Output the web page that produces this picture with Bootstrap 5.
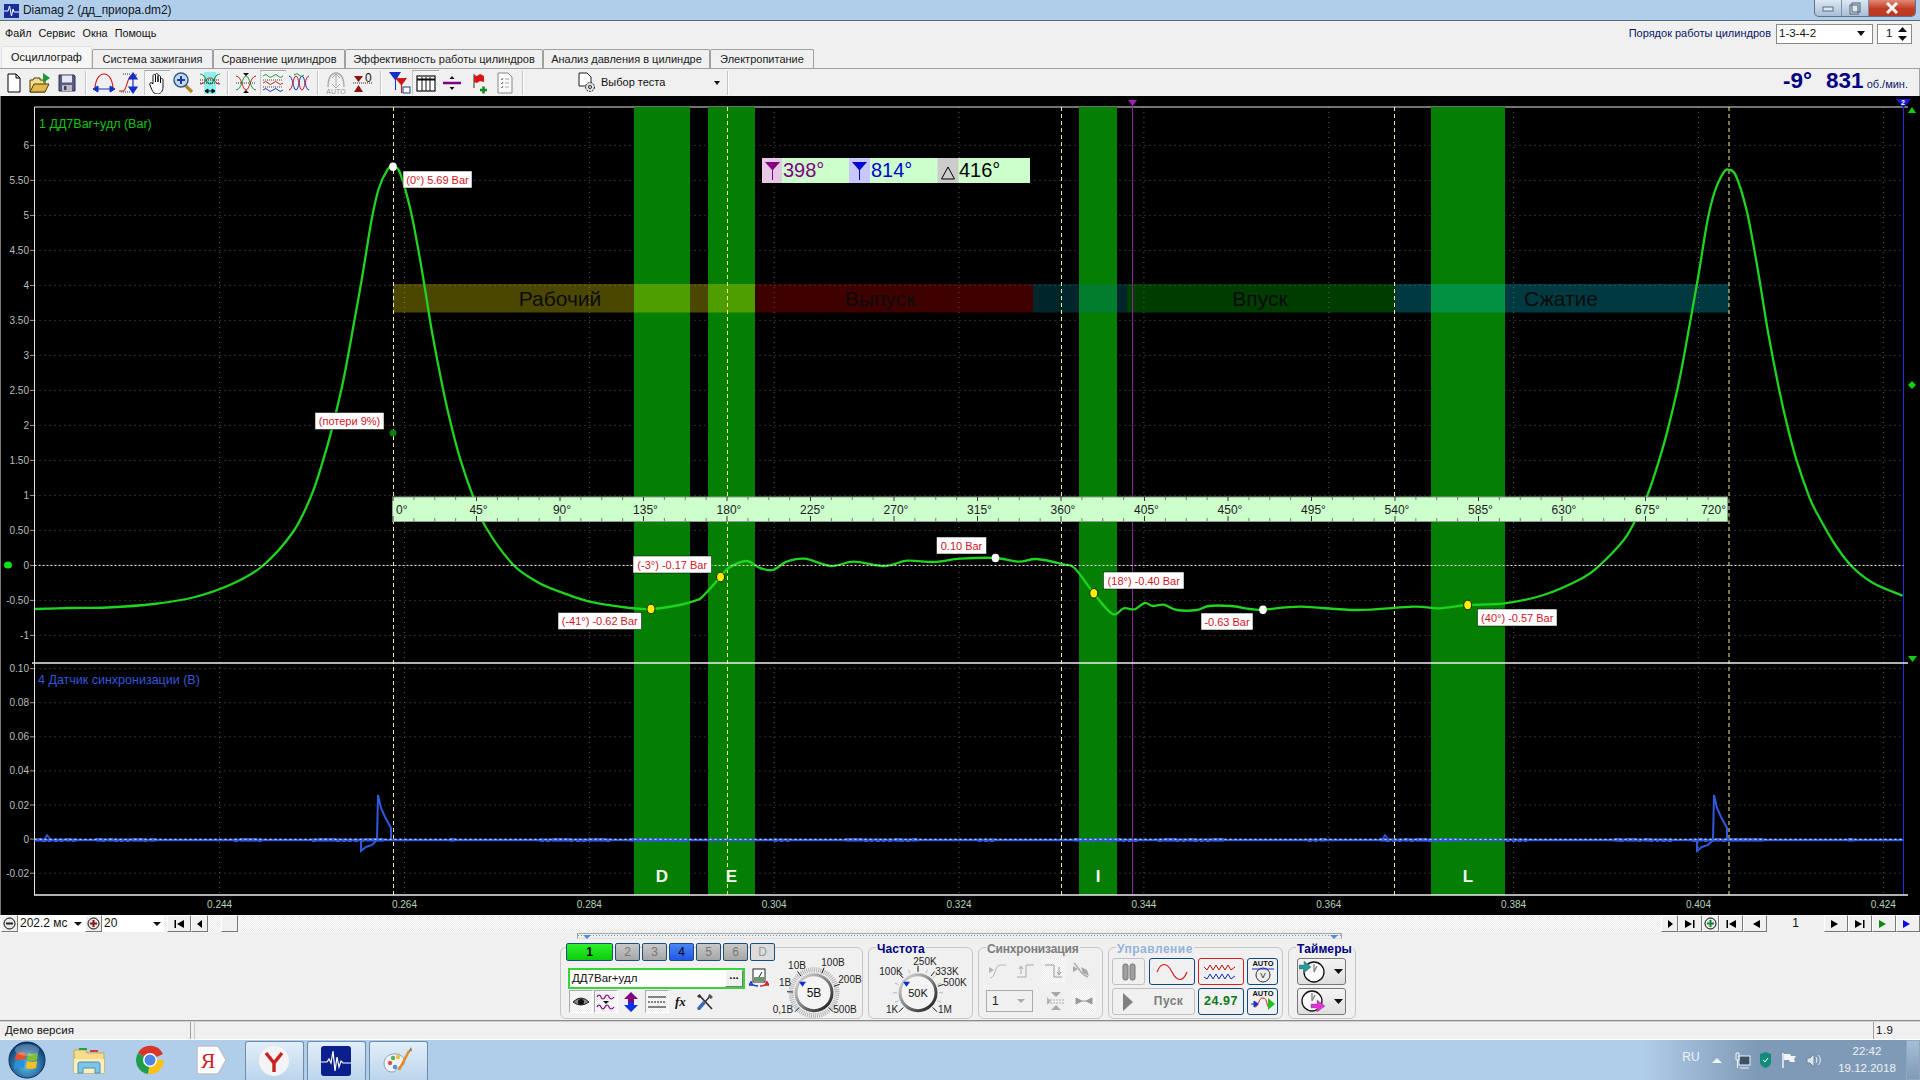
<!DOCTYPE html>
<html lang="ru">
<head>
<meta charset="utf-8">
<title>Diamag 2</title>
<link href="https://cdn.jsdelivr.net/npm/bootstrap@5.3.0/dist/css/bootstrap.min.css" rel="stylesheet">
<style>
    html, body { margin: 0; height: 1080px; overflow: hidden; background: #f0f0f0; }
    body { font: 11px/1.2 "Liberation Sans", Arial, sans-serif; color: #111; }
    svg { display: block; }
    .app-root { height: 1080px; }
    .dith { background: repeating-conic-gradient(#fff 0 25%, #e9e9e9 0 50%) 0 0 / 2px 2px; }

    .win-title { height: 21px; background: #b0cde9; border-bottom: 1px solid #5d6b78; font-size: 11.9px; }
    .win-title .cap { margin-left: 4px; color: #10181f; line-height: 13px; }
    .win-ctl { width: 102px; height: 17px; border: 1px solid #5f7186; border-top: 0; border-radius: 0 0 5px 5px; overflow: hidden; background: linear-gradient(#dce8f4, #a9bfd6); }
    .win-ctl span { height: 100%; width: 27px; border-right: 1px solid #7d8fa3; }
    .win-ctl .cl { flex: 1; border: 0; background: linear-gradient(#e08a78, #c43a22 55%, #b83a24); }

    .menu-row { height: 25px; padding-left: 5px; font-size: 10.8px; }
    .menu-row .mi { margin-right: 7px; }
    .order-lbl { color: #0b1566; margin-right: 5px; font-size: 11px; }
    .combo { height: 20px; background: #fff; border: 1px solid #8a8a8a; padding-left: 2px; font-size: 11.5px; }
    .combo .arr { margin-left: auto; margin-right: 7px; width: 0; height: 0; border: 4px solid transparent; border-top: 5px solid #111; border-bottom: 0; }
    .cb-order { width: 97px; }
    .cb-num { width: 35px; padding-left: 8px; }

    .scope-tabs { height: 22px; flex-wrap: nowrap; border: 0; padding-left: 1px; align-items: flex-end; }
    .scope-tabs .nav-link { height: 19px; padding: 3px 0 0; margin: 0; text-align: center; font-size: 11px; color: #222; border: 1px solid #a0a0a0; border-bottom: 0; border-radius: 2px 2px 0 0; background: #f0f0f0; white-space: nowrap; }
    .scope-tabs .nav-link.active { height: 22px; background: #f6f6f6; color: #111; padding-top: 4px; }
    .scope-tabs li:nth-child(1) .nav-link { width: 91px; }
    .scope-tabs li:nth-child(2) .nav-link { width: 121px; }
    .scope-tabs li:nth-child(3) .nav-link { width: 132px; }
    .scope-tabs li:nth-child(4) .nav-link { width: 198px; }
    .scope-tabs li:nth-child(5) .nav-link { width: 167px; }
    .scope-tabs li:nth-child(6) .nav-link { width: 104px; }

    .tool-row { height: 28px; border-top: 1px solid #a0a0a0; border-right: 1px solid #a0a0a0; padding-left: 1px; }
    .tb { width: 26.5px; height: 25px; flex: none; display: flex; align-items: center; justify-content: center; }
    .tb.on { background: repeating-conic-gradient(#fff 0 25%, #e9e9e9 0 50%) 0 0 / 2px 2px; border-top: 1px solid #a8a8a8; border-left: 1px solid #c8c8c8; }
    .tsep { width: 2px; height: 24px; flex: none; margin: 0 4px; background: #c4c4c4; border-right: 1px solid #fff; }
    .test-pick { width: 197px; padding-left: 47px; font-size: 11px; margin-left: 2px; }
    .test-pick .arr { margin-left: auto; margin-right: 7px; width: 0; height: 0; border: 3px solid transparent; border-top: 4px solid #111; border-bottom: 0; }
    .speed { color: #000080; font-weight: 700; font-size: 22.5px; line-height: 26px; margin-right: 11px; }
    .speed .deg { margin-right: 14px; }
    .speed small { font-weight: 400; font-size: 11px; color: #0b1566; margin-left: 3px; }

    #scope { background: #000; flex: none; }

    .pager { height: 17px; background: repeating-conic-gradient(#fff 0 25%, #e9e9e9 0 50%) 0 0 / 2px 2px; }
    .pg { width: 24px; height: 17px; flex: none; background: #f0f0f0; border: 1px solid; border-color: #fff #777 #777 #fff; display: flex; align-items: center; justify-content: center; color: #000; }
    .pg.sm { width: 17px; }
    .pg.first { margin-left: 1px; }
    .pg.after-fld { margin-left: 3px; }
    .pg.thumb { margin-left: 13px; }
    .pg.go { color: #0a8a0a; }
    .pg.blue { color: #0a0ae0; }
    .fld { height: 17px; background: #fff; font-size: 12px; padding-left: 2px; flex: none; }
    .fld .arr { margin-left: auto; margin-right: 3px; width: 0; height: 0; border: 4px solid transparent; border-top: 4px solid #111; border-bottom: 0; }
    .fld-ms { width: 67px; }
    .fld-n { width: 62px; }
    .pg-num { width: 57px; background: #f0f0f0; font-size: 12px; line-height: 17px; flex: none; text-align: center; }

    .ctl-panel { height: 89px; flex: none; border-bottom: 1px solid #8c8c8c; }
    .strip { height: 6px; width: 765px; margin: 1px 0 0 577px; border: 1px solid #a4a4a4; border-bottom-color: #ddd; background: repeating-linear-gradient(90deg, #5d8ecb 0 1px, #0000 1px 3px) 0 1px / 100% 1px no-repeat; position: relative; }
    .strip-mark { position: absolute; top: 1px; width: 0; height: 0; border: 4px solid transparent; border-top: 4px solid #4a90d8; border-bottom: 0; }
    .strip-mark.a { left: 5px; }
    .strip-mark.b { right: 3px; }
    .gboxes { padding-left: 560px; margin-top: 8px; gap: 5px; }
    .gbox { position: relative; height: 72px; border: 1px solid #c6c6c6; border-radius: 6px; flex: none; }
    .g-chan { width: 303px; }
    .g-chan-left { width: 215px; flex: none; }
    .g-freq { width: 105px; }
    .g-sync { width: 125px; }
    .g-ctl { width: 175px; }
    .g-tm { width: 68px; }
    .gtitle { position: absolute; left: 7px; top: -5px; font-weight: 700; font-size: 12px; line-height: 12px; background: #f0f0f0; padding: 0 1px; z-index: 1; }
    .t-navy { color: #000080; letter-spacing: .1px; }
    .t-gray { color: #7d7d7d; letter-spacing: -.15px; }
    .t-blue { color: #93b3d8; letter-spacing: .5px; }
    .knob { overflow: visible; }

    .chan-row { margin: -5px 0 0 5px; gap: 2px; }
    .chan { height: 18px; width: 25px; padding: 0; font-size: 12px; line-height: 14px; color: #777; border: 1px solid #1f4f78; border-radius: 2px; background: linear-gradient(#c9c9c9, #a6a6a6); }
    .chan.c1 { width: 47px; color: #000; background: linear-gradient(#2df02d, #0ccc0c); font-weight: 700; }
    .chan.c4 { color: #000; background: linear-gradient(#4a86f4, #2058e8); }
    .chan.cd { background: #dcdcdc; color: #999; }
    .name-fld { width: 177px; height: 21px; margin: 7px 0 0 7px; border: 2px solid #3ad33a; background: #fff; font-size: 11.5px; padding-left: 2px; }
    .name-fld .dots { margin-left: auto; width: 18px; height: 17px; background: #f0f0f0; border: 1px solid; border-color: #fff #777 #777 #fff; text-align: center; line-height: 9px; font-weight: 700; }
    .name-ic { margin: 7px 0 0 4px; }
    .chan-tools { margin-left: 8px; margin-top: 1px; }
    .ct { width: 24px; height: 23px; flex: none; display: flex; align-items: center; justify-content: center; }
    .ct.on { background: repeating-conic-gradient(#fff 0 25%, #eaeaea 0 50%) 0 0 / 2px 2px; border: 1px solid; border-color: #aaa #fff #fff #aaa; }
    .ct.m1 { margin-left: 1px; }
    .ct.m2 { margin-left: 2px; }
    .ct.mn { margin-left: -2px; }

    .sync-row { gap: 4px; padding-left: 7px; }
    .sync-row.r1 { margin-top: 11px; }
    .sync-row.r2 { margin-top: 6px; }
    .si { width: 24px; height: 24px; flex: none; display: flex; align-items: center; justify-content: center; }
    .sync-sel { width: 47px; height: 22px; border: 1px solid #aaa; font-size: 12px; padding-left: 5px; color: #222; margin-right: 7px; }
    .sync-sel .arr { margin-left: auto; margin-right: 7px; width: 0; height: 0; border: 4px solid transparent; border-top: 4px solid #aaa; border-bottom: 0; }

    .ctl-row { gap: 3px; padding-left: 3px; }
    .ctl-row.r1 { margin-top: 10px; }
    .ctl-row.r2 { margin-top: 3px; }
    .kb { height: 27px; flex: none; padding: 0; display: flex; align-items: center; justify-content: center; border-radius: 3px; background: #f0f0f0; border: 1px solid #0f4a7e; }
    .kb.dim { border-color: #c0c0c0; }
    .kb.red { border-color: #d42020; }
    .kb.raised { background: linear-gradient(#f4f4f4, #dedede); border: 1px solid #777; width: 49px; margin-left: 8px; }
    .kb.raised.top { margin-top: 10px; }
    .kb.raised.low { margin-top: 3px; }
    .w31 { width: 31px; }
    .w33 { width: 33px; }
    .w46 { width: 46px; }
    .w46.nudge { margin-left: 1px; }
    .w83 { width: 83px; }
    .go-ic { margin-left: 2px; }
    .go-txt { font-weight: 700; font-size: 12px; color: #7d7d7d; margin-left: 20px; margin-right: 4px; letter-spacing: .4px; }
    .freq-val { font-weight: 700; font-size: 12.5px; color: #0a7a1a; letter-spacing: .5px; }

    .status-row { height: 18px; flex: none; border-top: 1px solid #d0d0d0; font-size: 11.5px; }
    .st-a { width: 191px; padding: 2px 0 0 5px; border-right: 1px solid #a0a0a0; }
    .st-b { width: 3px; }
    .st-c { flex: 1; border-left: 1px solid #c8c8c8; border-right: 1px solid #a0a0a0; }
    .st-d { width: 46px; padding: 2px 0 0 2px; letter-spacing: .5px; }

    .taskbar { height: 41px; flex: none; border-top: 1px solid #fff; background: linear-gradient(90deg, #b0cde9 85.5%, #7f9ab6 91.5%); }
    .orb { width: 58.5px; flex: none; display: flex; justify-content: center; padding-right: 5px; }
    .tk { width: 61px; flex: none; display: flex; align-items: center; justify-content: center; }
    .tk-box { width: 59px; height: 39px; flex: none; margin-left: 3px; display: flex; align-items: center; justify-content: center; border: 1px solid #6e8cab; border-bottom: 0; border-radius: 3px 3px 0 0; background: linear-gradient(#e2eef9, #bcd5ec); }
    .tray { margin-left: auto; color: #eef3f8; }
    .tray > div { display: flex; align-items: center; justify-content: center; height: 40px; flex: none; }
    .tray .t-lang { width: 26px; font-size: 12px; padding-bottom: 5px; }
    .tray .t26 { width: 26px; }
    .tray .t24 { width: 24px; }
    .tray .t23 { width: 23px; }
    .tray .t28 { width: 28px; }
    .clock { width: 78px; flex-direction: column; font-size: 11.5px; line-height: 17px; }
    .show-desk { width: 14px; border: 1px solid #8ea6bf; background: linear-gradient(#a7bed6, #8099b4); }
</style>
</head>
<body>
<svg width="0" height="0" class="position-absolute">
    <defs>
        <symbol id="g-r" viewBox="0 0 10 10"><path d="M3 1l5 4-5 4z" fill="currentColor"/></symbol>
        <symbol id="g-l" viewBox="0 0 10 10"><path d="M7 1L2 5l5 4z" fill="currentColor"/></symbol>
        <symbol id="g-rr" viewBox="0 0 12 10"><path d="M1 1l7 4-7 4z" fill="currentColor"/></symbol>
        <symbol id="g-ll" viewBox="0 0 12 10"><path d="M11 1L4 5l7 4z" fill="currentColor"/></symbol>
        <symbol id="g-last" viewBox="0 0 12 10"><path d="M1 1l7 4-7 4zM9 1h1.5v8H9z" fill="currentColor"/></symbol>
        <symbol id="g-first" viewBox="0 0 12 10"><path d="M11 1L4 5l7 4zM1.5 1H3v8H1.5z" fill="currentColor"/></symbol>
        <symbol id="g-clock" viewBox="0 0 28 24"><circle cx="13" cy="12" r="10" fill="#fafafa" stroke="#111" stroke-width="1.3"/><path d="M13 12l3-6M13 12V4" stroke="#888" stroke-width="1.4" fill="none"/></symbol>
    </defs>
</svg>

<div class="app-root d-flex flex-column">

    <!-- title bar -->
    <div class="win-title d-flex align-items-start flex-shrink-0">
        <svg class="ms-1 mt-1" width="15" height="14" viewBox="0 0 15 14"><rect width="15" height="14" fill="#1a2f9c"/><path d="M0 7h4l1.5-5 2 10 1.5-7 1 3h5" stroke="#fff" fill="none"/></svg>
        <span class="cap mt-1">Diamag 2 (дд_приора.dm2)</span>
        <div class="win-ctl d-flex ms-auto me-1">
            <span class="d-flex align-items-center justify-content-center"><svg width="12" height="8"><rect x="1" y="3" width="10" height="4" fill="#dfe7ef" stroke="#5c6c7d"/></svg></span>
            <span class="d-flex align-items-center justify-content-center"><svg width="12" height="13"><rect x="1" y="3" width="8" height="9" fill="#dfe7ef" stroke="#4f5f70"/><rect x="3" y="1" width="8" height="9" fill="none" stroke="#4f5f70"/></svg></span>
            <span class="cl d-flex align-items-center justify-content-center"><svg width="14" height="12"><path d="M2 1l10 10M12 1L2 11" stroke="#f4f4f4" stroke-width="3"/></svg></span>
        </div>
    </div>

    <!-- menu -->
    <div class="menu-row d-flex align-items-center flex-shrink-0">
        <span class="mi">Файл</span><span class="mi">Сервис</span><span class="mi">Окна</span><span class="mi">Помощь</span>
        <span class="order-lbl ms-auto">Порядок работы цилиндров</span>
        <div class="combo cb-order d-flex align-items-center">1-3-4-2<span class="arr"></span></div>
        <div class="combo cb-num d-flex align-items-center ms-1 me-2">1
            <svg class="ms-auto me-1" width="9" height="14"><path d="M4.5 0L9 5H0zM0 9h9l-4.5 5z" fill="#111"/></svg>
        </div>
    </div>

    <!-- tabs -->
    <ul class="nav nav-tabs scope-tabs flex-shrink-0">
        <li class="nav-item"><a class="nav-link active" href="#">Осциллограф</a></li>
        <li class="nav-item"><a class="nav-link" href="#">Система зажигания</a></li>
        <li class="nav-item"><a class="nav-link" href="#">Сравнение цилиндров</a></li>
        <li class="nav-item"><a class="nav-link" href="#">Эффективность работы цилиндров</a></li>
        <li class="nav-item"><a class="nav-link" href="#">Анализ давления в цилиндре</a></li>
        <li class="nav-item"><a class="nav-link" href="#">Электропитание</a></li>
    </ul>

    <!-- toolbar -->
    <div class="tool-row d-flex align-items-center flex-shrink-0">
        <div class="tb"><svg width="22" height="22" viewBox="0 0 22 22"><path d="M5 2h8l4 4v14H5zM13 2v4h4" fill="#fff" stroke="#000"/></svg></div>
        <div class="tb"><svg width="24" height="22" viewBox="0 0 24 22"><path d="M1 20V8h3l1-2h6v2h5v12z" fill="#f4e08a" stroke="#4c3b05"/><path d="M1 20l4-8h15l-4 8z" fill="#e4b94c" stroke="#4c3b05"/><path d="M14 1l7 5-7 5z" fill="#1a9a3c"/></svg></div>
        <div class="tb"><svg width="20" height="20" viewBox="0 0 20 20"><path d="M2 2h15l1 1v15H2z" fill="#5a5a86" stroke="#33334f"/><rect x="5" y="2.5" width="10" height="7" fill="#e8e8f2"/><rect x="5" y="12" width="10" height="6" fill="#bcbcc8"/><rect x="7" y="13" width="2.5" height="4" fill="#444"/></svg></div>
        <div class="tsep"></div>
        <div class="tb"><svg width="24" height="22" viewBox="0 0 24 22"><path d="M3 18C3 8 7 2 12 2s9 6 9 16" fill="none" stroke="#d01818" stroke-width="1.2"/><path d="M4 17h16M1 17l5-3v6zM23 17l-5-3v6z" fill="#1030c8" stroke="#1030c8"/></svg></div>
        <div class="tb"><svg width="24" height="22" viewBox="0 0 24 22"><path d="M1 19h4C9 19 9 4 14 3h5" fill="none" stroke="#d01818" stroke-width="1.1"/><path d="M5 2h8M3 20h9" stroke="#333" stroke-dasharray="1 1"/><path d="M15 5v12M15 1l-4 6h8zM15 21l-4-6h8z" fill="#1030c8" stroke="#1030c8" stroke-width="1.2"/></svg></div>
        <div class="tb on"><svg width="20" height="22" viewBox="0 0 20 22"><path d="M6 12V4c0-2 2.500-2 2.500 0v6V3c0-2 2.500-2 2.500 0v7-5c0-2 2.500-2 2.500 0v6-3c0-2 2.500-2 2.500 0v7c0 4-2 7-6 7-3 0-4-2-5-4L3 13c-1-2 1-3 2-2z" fill="#fff" stroke="#000" stroke-width=".9"/></svg></div>
        <div class="tb"><svg width="22" height="22" viewBox="0 0 22 22"><path d="M13 13l7 7" stroke="#b08a2a" stroke-width="3.200"/><circle cx="9" cy="8" r="7" fill="#c4d8f2" stroke="#385a88" stroke-width="1.500"/><path d="M5 8h8M9 4v8" stroke="#1c3f9c" stroke-width="2"/></svg></div>
        <div class="tb"><svg width="24" height="24" viewBox="0 0 24 24"><rect x="6" y="1" width="12" height="22" fill="#8cf0f0"/><path d="M2 3c7 0 5 10 10 10s3-10 10-10" fill="none" stroke="#149a38" stroke-width="1.200"/><path d="M2 9h20M2 12h20" stroke="#222" stroke-dasharray="1 1"/><path d="M2 13c6 0 5-6 10-6s4 6 10 6" fill="none" stroke="#c81818"/><path d="M7 20h10M7 20l3-2v4zM17 20l-3-2v4z" stroke="#111" fill="#111"/></svg></div>
        <div class="tsep"></div>
        <div class="tb"><svg width="24" height="22" viewBox="0 0 24 22"><path d="M2 4c6 0 6 14 10 14S16 4 22 4" fill="none" stroke="#d01818"/><path d="M2 18c6 0 6-14 10-14s4 14 10 14" fill="none" stroke="#149a38"/><path d="M2 11h20" stroke="#333" stroke-dasharray="1 1"/><path d="M9 1h6l-3 3zM9 21h6l-3-3z" fill="#111"/></svg></div>
        <div class="tb on"><svg width="22" height="22" viewBox="0 0 22 22"><path d="M1 4q3-3 5 0t5 0 5 0 5 0" fill="none" stroke="#149a38"/><path d="M1 11q3-3 5 0t5 0 5 0 5 0" fill="none" stroke="#d01818"/><path d="M1 18q3-3 5 0t5 0 5 0 5 0" fill="none" stroke="#1030c8"/><path d="M1 8h20M1 15h20" stroke="#444" stroke-dasharray="1 1"/></svg></div>
        <div class="tb"><svg width="22" height="22" viewBox="0 0 22 22"><path d="M1 4c4 0 4 14 7 14s3-14 6-14 3 14 7 14" fill="none" stroke="#1030c8"/><path d="M1 18c4 0 4-14 7-14s3 14 6 14 3-14 7-14" fill="none" stroke="#d01818"/><path d="M6 3q3-3 5 0t5 0" fill="none" stroke="#149a38"/></svg></div>
        <div class="tsep"></div>
        <div class="tb"><svg width="22" height="24" viewBox="0 0 22 24"><path d="M3 16C3 6 7 2 11 2s8 4 8 14" fill="none" stroke="#aaa" stroke-width="1.400"/><path d="M11 4v11M7 7l4-4 4 4M7 13l4 4 4-4" fill="none" stroke="#aaa"/><text x="11" y="23" text-anchor="middle" font-size="7" fill="#999" font-family="Liberation Sans">AUTO</text></svg></div>
        <div class="tb"><svg width="22" height="22" viewBox="0 0 22 22"><text x="14" y="10" font-size="12" font-family="Liberation Sans" fill="#111">0</text><path d="M2 11h19" stroke="#222" stroke-dasharray="1 1"/><path d="M3 4h9l-4.500 6zM3 20h9l-4.500-7z" fill="#8c1414"/></svg></div>
        <div class="tsep"></div>
        <div class="tb"><svg width="24" height="24" viewBox="0 0 24 24"><path d="M2 1h12L9 9v10H8V9z" fill="#1030c8"/><path d="M8 7h12l-5 7v8h-1v-8z" fill="#d01818"/><rect x="16" y="16" width="7" height="6" fill="#fff" stroke="#1f3f88"/></svg></div>
        <div class="tb on"><svg width="22" height="20" viewBox="0 0 22 20"><rect x="2" y="3" width="18" height="15" fill="#fff" stroke="#111" stroke-width="1.200"/><path d="M2 6.500h18" stroke="#111" stroke-width="2"/><path d="M7 4v14M11 4v14M15 4v14" stroke="#111"/></svg></div>
        <div class="tb"><svg width="22" height="20" viewBox="0 0 22 20"><path d="M2 10h18" stroke="#800080" stroke-width="2.500"/><path d="M8.500 6h5l-2.500-3zM8.500 14h5L11 17z" fill="#111"/></svg></div>
        <div class="tb"><svg width="20" height="22" viewBox="0 0 20 22"><path d="M6 2v14" stroke="#333"/><path d="M6 3l3 1 3-2 4 2v6l-4-1-3 2-3-1z" fill="#dd1212"/><path d="M12 18h7M15.500 14.500v7" stroke="#12882a" stroke-width="2.600"/></svg></div>
        <div class="tb"><svg width="18" height="22" viewBox="0 0 18 22"><path d="M2 1h10l4 4v16H2z" fill="#fafafa" stroke="#888"/><path d="M5 7l1 1 1-2M5 11l1 1 1-2M5 15l1 1 1-2" fill="none" stroke="#777"/><path d="M9 7h4M9 11h4M9 15h4" stroke="#aaa"/></svg></div>
        <div class="tsep"></div>
        <div class="test-pick d-flex align-items-center">
            <svg class="me-1" width="20" height="22" viewBox="0 0 20 22"><path d="M2 1h8l4 4v9H2z" fill="#fff" stroke="#222"/><circle cx="13" cy="15" r="4.500" fill="#ddd" stroke="#222" stroke-dasharray="2 1"/><circle cx="13" cy="15" r="1.500" fill="#fff" stroke="#222"/></svg>
            Выбор теста<span class="arr"></span>
        </div>
        <div class="tsep m-0"></div>
        <div class="speed ms-auto d-flex align-items-baseline"><span class="deg">-9°</span><span>831</span><small>об./мин.</small></div>
    </div>

    <!-- scope -->
    <svg id="scope" width="1920" height="819" viewBox="0 96 1920 819" font-family="Liberation Sans, Arial, sans-serif"></svg>

    <!-- paging row -->
    <div class="pager d-flex flex-shrink-0">
        <div class="pg sm first"><svg width="13" height="13" viewBox="0 0 13 13"><circle cx="6.500" cy="6.500" r="5.500" fill="#e8e8e8" stroke="#000"/><path d="M3 6.500h7" stroke="#223" stroke-width="2"/></svg></div>
        <div class="fld fld-ms d-flex align-items-center">202.2 мс<span class="arr"></span></div>
        <div class="pg sm"><svg width="13" height="13" viewBox="0 0 13 13"><circle cx="6.500" cy="6.500" r="5.500" fill="#e8e8e8" stroke="#000"/><path d="M3 6.500h7M6.500 3v7" stroke="#8c1414" stroke-width="2"/></svg></div>
        <div class="fld fld-n d-flex align-items-center">20<span class="arr"></span></div>
        <div class="pg after-fld"><svg width="12" height="10"><use href="#g-first"/></svg></div>
        <div class="pg sm"><svg width="10" height="10"><use href="#g-l"/></svg></div>
        <div class="pg sm thumb"></div>
        <div class="pg sm ms-auto"><svg width="10" height="10"><use href="#g-r"/></svg></div>
        <div class="pg"><svg width="12" height="10"><use href="#g-last"/></svg></div>
        <div class="pg sm"><svg width="13" height="13" viewBox="0 0 13 13"><circle cx="6.500" cy="6.500" r="5.500" fill="#e8e8e8" stroke="#000"/><path d="M3 6.500h7M6.500 3v7" stroke="#12882a" stroke-width="2"/></svg></div>
        <div class="pg"><svg width="12" height="10"><use href="#g-first"/></svg></div>
        <div class="pg"><svg width="12" height="10"><use href="#g-ll"/></svg></div>
        <div class="pg-num">1</div>
        <div class="pg"><svg width="12" height="10"><use href="#g-rr"/></svg></div>
        <div class="pg"><svg width="12" height="10"><use href="#g-last"/></svg></div>
        <div class="pg go"><svg width="12" height="10"><use href="#g-rr"/></svg></div>
        <div class="pg blue"><svg width="12" height="10"><use href="#g-rr"/></svg></div>
    </div>

    <!-- control panel -->
    <div class="ctl-panel">
        <div class="strip"><span class="strip-mark a"></span><span class="strip-mark b"></span></div>
        <div class="gboxes d-flex">

            <div class="gbox g-chan d-flex">
                <div class="g-chan-left">
                    <div class="chan-row d-flex">
                        <button class="btn chan c1">1</button><button class="btn chan">2</button><button class="btn chan">3</button><button class="btn chan c4">4</button><button class="btn chan">5</button><button class="btn chan">6</button><button class="btn chan cd">D</button>
                    </div>
                    <div class="d-flex align-items-start">
                        <div class="name-fld d-flex align-items-center">ДД7Bar+удл<span class="dots">...</span></div>
                        <svg class="name-ic" width="20" height="21" viewBox="0 0 20 21"><rect x="4" y="1" width="12" height="13" fill="#fff" stroke="#222"/><rect x="5" y="9" width="10" height="4" fill="#6a9a6a"/><path d="M10 9l3-5" stroke="#222"/><path d="M2 13c0 4 3 5 7 5M2 14l-2 3h4z" fill="none" stroke="#1030c8" stroke-width="1.300"/><path d="M18 13c0 4-3 5-7 5M18 14l2 3h-4z" fill="none" stroke="#c81818" stroke-width="1.300"/></svg>
                    </div>
                    <div class="chan-tools d-flex">
                        <div class="ct on"><svg width="18" height="12" viewBox="0 0 18 12"><path d="M1 6q8-8 16 0-8 6-16 0z" fill="#888" stroke="#222"/><circle cx="9" cy="6" r="3" fill="#111"/></svg></div>
                        <div class="ct on m1"><svg width="20" height="20" viewBox="0 0 20 20"><path d="M1 5q2-4 4 0t4 0 4 0 5 0M1 15q2-4 4 0t4 0 4 0 5 0" fill="none" stroke="#800080" stroke-width="1.200"/><path d="M7 9h6l-3 3z" fill="#111"/></svg></div>
                        <div class="ct m1"><svg width="16" height="22" viewBox="0 0 16 22"><path d="M8 1l7 7h-4v3H5V8H1z" fill="#800080"/><path d="M8 21l7-7h-4v-3H5v3H1z" fill="#1030e0"/></svg></div>
                        <div class="ct on m2"><svg width="20" height="14" viewBox="0 0 20 14"><path d="M1 2h18M1 12h18" stroke="#111" stroke-width="1.200"/><path d="M1 7h18" stroke="#111" stroke-dasharray="2 1"/></svg></div>
                        <div class="ct m2"><svg width="16" height="14" viewBox="0 0 16 14"><text x="0" y="11" font-family="Liberation Serif" font-style="italic" font-weight="700" font-size="13" fill="#111">fx</text></svg></div>
                        <div class="ct mn"><svg width="18" height="18" viewBox="0 0 18 18"><path d="M3 2l13 14" stroke="#333" stroke-width="1.800"/><path d="M1 3l3-2 1 3-2 1z" fill="#333"/><path d="M15 2L9 9" stroke="#333" stroke-width="1.400"/><path d="M2 17l-1-2 6-7 3 2-6 7z" fill="#3a6ab8"/><path d="M13 1l4 3-2 2-3-2z" fill="#555"/></svg></div>
                    </div>
                </div>
                <svg class="knob" data-kind="v" width="87" height="70" viewBox="0 0 87 70"></svg>
            </div>

            <div class="gbox g-freq">
                <span class="gtitle t-navy">Частота</span>
                <svg class="knob" data-kind="f" width="103" height="70" viewBox="0 0 103 70"></svg>
            </div>

            <div class="gbox g-sync">
                <span class="gtitle t-gray">Синхронизация</span>
                <div class="sync-row r1 d-flex">
                    <div class="si"><svg width="20" height="20" viewBox="0 0 20 20"><path d="M2 17c6 0 4-12 10-13h6" fill="none" stroke="#b4b4b4"/><path d="M1 6l5 3-5 3z" fill="#b4b4b4"/></svg></div>
                    <div class="si"><svg width="20" height="20" viewBox="0 0 20 20"><path d="M1 16h9V4h8M5 13V6M3 8l2-3 2 3" fill="none" stroke="#aaa"/></svg></div>
                    <div class="si dith"><svg width="20" height="20" viewBox="0 0 20 20"><path d="M1 4h9v12h8M15 6v7M13 11l2 3 2-3" fill="none" stroke="#999"/></svg></div>
                    <div class="si"><svg width="20" height="20" viewBox="0 0 20 20"><path d="M2 2c5 4 6 12 14 14" fill="none" stroke="#aaa" stroke-width="1.600"/><path d="M1 5l5 3-5 3zM9 6l6 3 2 6-6-3z" fill="#a8a8a8"/></svg></div>
                </div>
                <div class="sync-row r2 d-flex align-items-center">
                    <div class="sync-sel d-flex align-items-center">1<span class="arr"></span></div>
                    <div class="si"><svg width="20" height="20" viewBox="0 0 20 20"><path d="M5 1h10l-5 5zM5 19h10l-5-5z" fill="#a8a8a8"/><path d="M1 9h18M1 12h18" stroke="#aaa" stroke-dasharray="2 1"/><path d="M1 6l4 4-4 4z" fill="#b4b4b4"/></svg></div>
                    <div class="si dith"><svg width="20" height="14" viewBox="0 0 20 14"><path d="M2 4l6 3-6 3zM18 4l-6 3 6 3zM8 7h4" fill="#999" stroke="#999"/></svg></div>
                </div>
            </div>

            <div class="gbox g-ctl">
                <span class="gtitle t-blue">Управление</span>
                <div class="ctl-row r1 d-flex">
                    <div class="kb dim w33"><svg width="14" height="18"><rect x="1" y="1" width="5" height="16" rx="2" fill="#a0a0a0" stroke="#777"/><rect x="8" y="1" width="5" height="16" rx="2" fill="#a0a0a0" stroke="#777"/></svg></div>
                    <div class="kb w46 nudge"><svg width="32" height="20" viewBox="0 0 32 20"><path d="M1 10C5 0 11 0 16 10s11 10 15 0" fill="none" stroke="#d01818" stroke-width="1.200"/></svg></div>
                    <div class="kb red w46"><svg width="36" height="20" viewBox="0 0 36 20"><path d="M1 5l3 3 3-5 3 5 3-5 3 5 3-5 3 5 3-5 3 5 4-3" fill="none" stroke="#c01010"/><path d="M1 15l3 2 3-5 3 5 3-5 3 5 3-5 3 5 3-5 3 5 4-3" fill="none" stroke="#1030c8"/></svg></div>
                    <div class="kb w31"><svg width="26" height="25" viewBox="0 0 26 25"><text x="13" y="7" text-anchor="middle" font-size="7.500" font-weight="700" fill="#111" font-family="Liberation Sans">AUTO</text><circle cx="13" cy="16" r="7" fill="#eee" stroke="#333"/><text x="13" y="19" text-anchor="middle" font-size="8" fill="#111" font-family="Liberation Sans">V</text><path d="M2 10h22" stroke="#1030c8"/></svg></div>
                </div>
                <div class="ctl-row r2 d-flex">
                    <div class="kb dim w83"><svg class="go-ic" width="12" height="20"><path d="M1 1l10 9-10 9z" fill="#808080"/></svg><span class="go-txt">Пуск</span></div>
                    <div class="kb w46"><span class="freq-val">24.97</span></div>
                    <div class="kb w31"><svg width="26" height="25" viewBox="0 0 26 25"><text x="13" y="7" text-anchor="middle" font-size="7.500" font-weight="700" fill="#111" font-family="Liberation Sans">AUTO</text><path d="M5 18c4 0 3-9 8-9s3 9 6 9" fill="none" stroke="#d01818"/><path d="M1 15h6M4 12l4 3-4 3z" fill="#1030c8" stroke="#1030c8"/><path d="M18 9l7 6-7 6z" fill="#20c020"/></svg></div>
                </div>
            </div>

            <div class="gbox g-tm">
                <span class="gtitle t-navy">Таймеры</span>
                <div class="kb raised top">
                    <svg width="30" height="25" viewBox="0 0 30 25"><use href="#g-clock" x="2" y="1" width="28" height="24"/><path d="M0 6h5V2l7 6-7 6v-4H0z" fill="#2a9a98" stroke="#555" stroke-width=".4"/></svg>
                    <svg width="11" height="6" class="ms-1"><path d="M1 0h9L5.500 5z" fill="#111"/></svg>
                </div>
                <div class="kb raised low">
                    <svg width="30" height="25" viewBox="0 0 30 25"><use href="#g-clock" width="28" height="24"/><path d="M12 15h6v-4l8 6-8 6v-4h-6z" fill="#e030d8" stroke="#555" stroke-width=".4"/></svg>
                    <svg width="11" height="6" class="ms-1"><path d="M1 0h9L5.500 5z" fill="#111"/></svg>
                </div>
            </div>
        </div>
    </div>

    <!-- status bar -->
    <div class="status-row d-flex">
        <div class="st-a">Демо версия</div><div class="st-b"></div><div class="st-c"></div><div class="st-d">1.9</div>
    </div>

    <!-- taskbar -->
    <div class="taskbar d-flex align-items-end">
        <div class="orb align-self-center">
            <svg width="38" height="38" viewBox="0 0 38 38">
                <defs><radialGradient id="orbg" cx=".5" cy=".65" r=".6"><stop offset="0" stop-color="#5fc0e8"/><stop offset="1" stop-color="#0c3f78"/></radialGradient></defs>
                <circle cx="19" cy="19" r="18" fill="url(#orbg)" stroke="#0b2c50"/>
                <path d="M8 13q5-3 10-1l-1 7q-5-2-10 1z" fill="#e8502a"/><path d="M20 12q5 2 10 0l-1 7q-5 2-10 0z" fill="#80c030"/><path d="M7 21q5-3 10-1l-1 7q-5-2-10 1z" fill="#2a90e0"/><path d="M19 20q5 2 10 0l-1 7q-5 2-10 0z" fill="#f8c020"/>
                <ellipse cx="19" cy="9" rx="12" ry="6" fill="#fff" opacity=".25"/>
            </svg>
        </div>
        <div class="tk align-self-center"><svg width="32" height="30" viewBox="0 0 32 30"><path d="M1 5h11l2 3h17v20H1z" fill="#f4dc8c" stroke="#c8a850"/><rect x="6" y="3" width="8" height="2" fill="#2aa040"/><rect x="17" y="5" width="8" height="2" fill="#d04030"/><path d="M1 14h30v14H1z" fill="#fbeeb8"/><path d="M5 28v-9q0-2 2-2h18q2 0 2 2v9h-5v-5H10v5z" fill="#7cc4e8" stroke="#4a90b8"/></svg></div>
        <div class="tk align-self-center"><svg width="30" height="30" viewBox="0 0 30 30"><path d="M15 15L3 8A14 14 0 0 1 28 9z" fill="#d8362a"/><path d="M15 15h14A14 14 0 0 1 13 29z" fill="#fbc116"/><path d="M15 15L13 29A14 14 0 0 1 3 8z" fill="#1f9e4a"/><circle cx="15" cy="15" r="7" fill="#fff"/><circle cx="15" cy="15" r="5.500" fill="#4a86e8"/></svg></div>
        <div class="tk align-self-center"><svg width="32" height="30" viewBox="0 0 32 30"><path d="M2 1h21l8 14-8 14H2z" fill="#fff" stroke="#b8c4d0" stroke-width="1.500"/><text x="13" y="23" text-anchor="middle" font-size="22" fill="#cc1f1f" font-family="Liberation Serif">Я</text></svg></div>
        <div class="tk-box"><svg width="32" height="32" viewBox="0 0 32 32"><circle cx="16" cy="16" r="15" fill="#f4f4f4"/><path d="M8 8l8 10 8-10M16 18v9" fill="none" stroke="#cc1f1f" stroke-width="3.400"/></svg></div>
        <div class="tk-box"><svg width="30" height="30" viewBox="0 0 30 30"><rect width="30" height="30" rx="3" fill="#0a1f8c"/><path d="M0 16h6l2-3 2 4 2-12 2 20 2-14 2 10 2-6 2 2h8" fill="none" stroke="#fff" stroke-width="1.200"/></svg></div>
        <div class="tk-box"><svg width="32" height="30" viewBox="0 0 32 30"><path d="M2 17C2 9 12 6 18 9s6 10 1 11-4 6-9 6-8-4-8-9z" fill="#eef3f7" stroke="#8aa0b4"/><circle cx="8" cy="17" r="2.200" fill="#e0504a"/><circle cx="11" cy="12" r="2.200" fill="#60b060"/><circle cx="16" cy="11" r="2.200" fill="#f0c040"/><circle cx="13" cy="21" r="2.200" fill="#5a8ad8"/><path d="M17 24L27 5" stroke="#e88a20" stroke-width="2.600"/><path d="M26 6l3-5 1 4z" fill="#a07a50"/></svg></div>
        <div class="tray d-flex">
            <div class="t-lang">RU</div>
            <div class="t26"><svg width="10" height="6"><path d="M0 6l5-5 5 5z" fill="#f2f5f8"/></svg></div>
            <div class="t24"><svg width="17" height="17" viewBox="0 0 17 17"><rect x="5" y="4" width="11" height="9" fill="#3e5266" stroke="#eef3f8"/><path d="M2 1v7h3V1zM3.500 8v8M6 16h9" stroke="#eef3f8" fill="none"/></svg></div>
            <div class="t23"><svg width="13" height="16" viewBox="0 0 13 16"><path d="M1 2l5.500-2L12 2v8q0 4-5.500 6Q1 14 1 10z" fill="#128c78"/><path d="M4 8l2 2 3-4" fill="none" stroke="#fff"/></svg></div>
            <div class="t23"><svg width="16" height="17" viewBox="0 0 16 17"><path d="M2 1v15" stroke="#f2f5f8" stroke-width="1.500"/><path d="M3 2h6l1 2h5l-2 3 1 3H9l-1-2H3z" fill="#f2f5f8"/></svg></div>
            <div class="t28"><svg width="17" height="15" viewBox="0 0 17 15"><path d="M1 5h3l4-4v13l-4-4H1z" fill="#dde5ee" stroke="#71879e"/><path d="M10 4q2 3 0 6M12.500 2q3.500 5 0 10" fill="none" stroke="#eef3f8"/></svg></div>
            <div class="clock"><span>22:42</span><span>19.12.2018</span></div>
            <div class="show-desk"></div>
        </div>
    </div>
</div>

<script>
    const scope = document.getElementById('scope');
    let s = '';

    // coordinates in the chart are page pixels (viewBox starts at y=96)
    const L = 34.5, R = 1903.5, TOP = 107, DIV = 663, BOT = 895;
    const line = (x1, y1, x2, y2, c, extra) => `<line x1="${x1}" y1="${y1}" x2="${x2}" y2="${y2}" stroke="${c}" ${extra || ''}/>`;
    const txt = (x, y, t, c, size, extra) => `<text x="${x}" y="${y}" fill="${c}" font-size="${size}" ${extra || ''}>${t}</text>`;

    s += line(0.5, 96, 0.5, 915, '#777');

    // horizontal grid + y labels, upper chart
    ['6', '5.50', '5', '4.50', '4', '3.50', '3', '2.50', '2', '1.50', '1', '0.50', '0', '-0.50', '-1'].forEach((lb, i) => {
        const y = 145.4 + i * 35;
        s += line(L, y, R, y, '#5a5a5a', 'stroke-dasharray="1 4"');
        s += line(30, y, L, y, '#999');
        s += txt(29, y + 3.5, lb, '#bdbdbd', 10, 'text-anchor="end"');
    });
    // lower chart
    ['0.10', '0.08', '0.06', '0.04', '0.02', '0', '-0.02'].forEach((lb, i) => {
        const y = 668.6 + i * 34.1;
        s += line(L, y, R, y, '#5a5a5a', 'stroke-dasharray="1 4"');
        s += line(30, y, L, y, '#999');
        s += txt(29, y + 3.5, lb, '#bdbdbd', 10, 'text-anchor="end"');
    });
    // time grid + x labels
    for (let i = 0; i < 10; i++) {
        const x = 219.6 + i * 184.86;
        s += line(x, TOP, x, BOT, '#5a5a5a', 'stroke-dasharray="1 4"');
        s += txt(x, 908, (0.244 + i * 0.02).toFixed(3), '#b6d2b6', 10, 'text-anchor="middle"');
    }

    // frame goes under the zones
    s += line(L, TOP, 1908, TOP, '#e4e4e4') + line(L, TOP, L, BOT, '#e4e4e4');

    // green zones
    const zones = [[634, 690, 'D'], [708, 755, 'E'], [1079, 1117, 'I'], [1431, 1505, 'L']];
    zones.forEach(z => { s += `<rect x="${z[0]}" y="${TOP}" width="${z[1] - z[0]}" height="${BOT - TOP}" fill="#047f04"/>`; });
    zones.forEach(z => { s += txt((z[0] + z[1]) / 2, 882, z[2], '#f4f4f4', 17, 'text-anchor="middle" font-weight="700"'); });

    // stroke bands
    [[393, 755, '#f6e600'], [755, 1033, '#cc0000'], [1033, 1127, '#007a8a'], [1127, 1395, '#00c000'], [1395, 1729, '#00bacd']].forEach(b => {
        s += `<rect x="${b[0]}" y="284" width="${b[1] - b[0]}" height="28.500" fill="${b[2]}" fill-opacity=".31"/>`;
    });
    [[560, 'Рабочий'], [880, 'Выпуск'], [1260, 'Впуск'], [1561, 'Сжатие']].forEach(b => {
        s += txt(b[0], 305.5, b[1], '#0b0b0b', 21, 'text-anchor="middle"');
    });

    // cycle markers and cursors
    [393.5, 727.5, 1061.5, 1394.5, 1729].forEach(x => { s += line(x, TOP, x, BOT, '#f4f08c', 'stroke-dasharray="4 3"'); });
    s += line(1132.5, 100, 1132.5, BOT, '#8a2a9a');
    s += line(1903.5, 104, 1903.5, BOT, '#2a2ae0');

    // pressure trace
    const peak = [[311, 496.4], [323, 460.7], [332, 428.6], [343, 382], [353.6, 325], [362.5, 275], [371.4, 221], [378.6, 189], [387.5, 169.6], [393, 166.8], [400, 173], [410.7, 210.7], [419.6, 257], [425, 289], [432, 332], [443, 389], [452, 428.6], [460.7, 460.7], [473, 496.4]];
    const trace = [[35, 609], [70, 608], [107, 607.5], [153.6, 604], [193, 597.5], [232, 584], [262.5, 566], [293, 532]]
        .concat(peak)
        .concat([[485.7, 527], [512.5, 564], [534, 580], [550, 588], [590, 601.7], [630, 608], [651, 609], [679.5, 605], [697, 600], [701, 598], [706, 593], [720.5, 577], [728.6, 568], [746.4, 561], [760, 568], [773, 570], [786.6, 561.7], [804.5, 558.7], [831, 566], [853.6, 561.7], [885, 566], [907, 560.7], [934, 562], [960.7, 558.7], [995.5, 558], [1018.8, 561.7], [1036.6, 559], [1063.4, 564.3], [1074.5, 568], [1093.8, 593.3], [1112.5, 614], [1123.7, 608.3], [1134.8, 609.3], [1144.6, 603], [1152.7, 606], [1163.8, 604.7], [1177, 610], [1197.3, 610], [1208.5, 606], [1230.8, 606], [1250, 609], [1263, 609.7], [1300.7, 606.7], [1357, 610], [1413.5, 606.7], [1439.5, 608.3], [1467.7, 605], [1504.5, 603.3], [1543.6, 595], [1582.6, 578], [1600, 565], [1623.8, 540], [1634.6, 521.7]])
        .concat(peak.map(p => [p[0] + 1336, p[1] < 200 ? p[1] + 3 : p[1]]))
        .concat([[1816.8, 513], [1834, 543], [1851.4, 566], [1873, 583], [1902.6, 595.7]]);
    let d = 'M' + trace[0];
    for (let i = 0; i < trace.length - 1; i++) {
        const p0 = trace[i - 1] || trace[i], p1 = trace[i], p2 = trace[i + 1], p3 = trace[i + 2] || p2;
        d += `C${(p1[0] + (p2[0] - p0[0]) / 6).toFixed(1)},${(p1[1] + (p2[1] - p0[1]) / 6).toFixed(1)} ${(p2[0] - (p3[0] - p1[0]) / 6).toFixed(1)},${(p2[1] - (p3[1] - p1[1]) / 6).toFixed(1)} ${p2[0]},${p2[1]}`;
    }
    s += `<path d="${d}" fill="none" stroke="#1fd41f" stroke-width="2.300"/>`;

    // sync channel: noisy baseline with two spikes
    let noise = '';
    for (let x = 36; x < 1902; x += 6) {
        const h = Math.sin(x * 12.9898) * 43758.5453;
        const r = h - Math.floor(h);
        const busy = Math.sin(x / 43) + Math.sin(x / 17) > 0.1;
        if (busy) noise += `<rect x="${x}" y="${r > .5 ? 838 : 838.5}" width="${3 + r * 3}" height="3.500" fill="#2f5ae0"/>`;
    }
    s += line(L, 840, 1903, 840, '#2f5ae0', 'stroke-width="2.500"') + noise;
    [0, 1336].forEach(dx => {
        s += `<path transform="translate(${dx} 0)" d="M361 840v11l5-4 6-2 5-5 1-45 3 13 4 9 6 11v12" fill="none" stroke="#2f5ae0" stroke-width="2"/>`;
    });
    s += `<path d="M44 840l3-5 4 5M1382 840l3-5 4 5" fill="none" stroke="#2f5ae0" stroke-width="1.500"/>`;

    // zero lines, dividers
    s += line(L, 565.4, R, 565.4, '#f4f4f4', 'stroke-dasharray="2 2"');
    s += line(L, 839.3, R, 839.3, '#f4f4f4', 'stroke-dasharray="2 3"');
    s += line(32, DIV, 1908, DIV, '#eee', 'stroke-width="1.500"');
    s += line(34, BOT, 1908, BOT, '#eee', 'stroke-width="1.500"');

    // angle ruler
    s += `<rect x="392.500" y="497" width="1335" height="24.500" fill="#ccffcc" stroke="#8f9f8f"/>`;
    for (let i = 0; i <= 64; i++) {
        const x = 393 + i * 20.875, big = i % 4 === 0;
        s += line(x, 497, x, big ? 501 : 500, big ? '#333' : '#777') + line(x, big ? 516 : 518, x, 521, big ? '#333' : '#777');
        if (big) {
            const a = i * 11.25;
            s += txt(i === 0 ? 396 : i === 64 ? 1726 : x + 2, 513.500, a + '°', '#1a1a1a', 12, i === 0 ? '' : i === 64 ? 'text-anchor="end"' : 'text-anchor="middle"');
        }
    }

    // readouts
    s += '<rect x="762" y="158" width="268" height="25" fill="#ccffcc"/>';
    s += '<rect x="762" y="158" width="20" height="25" fill="#e6c8e6"/><rect x="849" y="158" width="21" height="25" fill="#c8c8ff"/><rect x="937.500" y="158" width="21" height="25" fill="#cccccc"/>';
    s += '<path d="M765 162h15l-7 8v10h-1v-10z" fill="#800080"/><path d="M852 162h15l-7 8v10h-1v-10z" fill="#0000d0"/><path d="M948 167l-6.500 12h13z" fill="none" stroke="#000"/>';
    s += txt(783, 177, '398°', '#800080', 20) + txt(871, 177, '814°', '#0000d0', 20) + txt(959, 177, '416°', '#000', 20);

    // point labels
    [[403, 171, 69, '(0°) 5.69 Bar'], [315, 412.5, 69, '(потери 9%)'], [558, 612.5, 83.5, '(-41°) -0.62 Bar'], [633, 556, 78.5, '(-3°) -0.17 Bar'], [936.5, 537, 50, '0.10 Bar'], [1103.5, 572, 80.5, '(18°) -0.40 Bar'], [1201, 613, 52, '-0.63 Bar'], [1477.5, 609, 79.5, '(40°) -0.57 Bar']].forEach(l => {
        s += `<rect x="${l[0]}" y="${l[1]}" width="${l[2]}" height="17" fill="#fff" stroke="#000" stroke-width=".5"/>`;
        s += txt(l[0] + l[2] / 2, l[1] + 12.500, l[3], '#d01428', 11, 'text-anchor="middle"');
    });

    // markers
    [[651, 609], [720.5, 577], [1093.8, 593.3], [1467.7, 605]].forEach(p => { s += `<ellipse cx="${p[0]}" cy="${p[1]}" rx="4" ry="4.800" fill="#ffee00" stroke="#000" stroke-width=".8"/>`; });
    [[393, 166.8], [995.5, 558], [1263, 609.7]].forEach(p => { s += `<ellipse cx="${p[0]}" cy="${p[1]}" rx="3.800" ry="4.200" fill="#fff"/>`; });
    s += '<circle cx="393" cy="433" r="3.500" fill="#0a7a0a"/><ellipse cx="8" cy="565" rx="4" ry="3.500" fill="#10e010"/>';

    // channel captions and edge handles
    s += txt(39, 128, '1 ДД7Bar+удл (Bar)', '#12c412', 12.500);
    s += txt(38, 684, '4 Датчик синхронизации (В)', '#3457d8', 12.500);
    s += '<path d="M1128 100h9l-4.500 6z" fill="#a020b0"/>';
    s += '<path d="M1896 99h15l-7.500 9z" fill="#1818d8"/>' + txt(1901, 105, '2', '#fff', 7, 'font-weight="700"');
    s += '<path d="M1908 113l4-6 4 6z" fill="#10d010"/><path d="M1908 385l4-4 4 4-4 4z" fill="#10d010"/><path d="M1908 656h9l-4.500 6z" fill="#10d010"/>';
    scope.innerHTML = s;

    // knobs
    const knobs = {
        v: { cx: 38, labels: [['0,1В', 7, 65], ['1В', 9, 38], ['10В', 21, 21], ['100В', 57, 18], ['200В', 74, 35], ['500В', 69, 65]], major: [-135, -88, -38, 22, 72, 135], val: '5В', hatch: true, size: 12 },
        f: { cx: 49, labels: [['1K', 23, 65], ['100K', 22, 27], ['250K', 56, 17], ['333K', 78, 27], ['500K', 86, 38], ['1M', 76, 65]], major: [-135, -45, 0, 38, 72, 135], val: '50K', hatch: false, size: 11 }
    };
    document.querySelectorAll('.knob').forEach(el => {
        const k = knobs[el.dataset.kind], cy = 44.7;
        let h = `<defs><linearGradient id="kn${el.dataset.kind}" x1="0" y1="0" x2="1" y2="1"><stop offset="0" stop-color="#e4e4e4"/><stop offset=".55" stop-color="#777"/><stop offset="1" stop-color="#111"/></linearGradient></defs>`;
        if (k.hatch) {
            h += `<circle cx="${k.cx}" cy="${cy}" r="23" fill="none" stroke="#b4b4b4" stroke-width="5" stroke-dasharray="1 1"/>`;
        } else {
            for (let a = -135; a <= 135; a += 22.5) {
                const t = (a - 90) * Math.PI / 180;
                h += `<line x1="${k.cx + 21 * Math.cos(t)}" y1="${cy + 21 * Math.sin(t)}" x2="${k.cx + 25 * Math.cos(t)}" y2="${cy + 25 * Math.sin(t)}" stroke="#bbb"/>`;
            }
        }
        k.major.forEach(a => {
            const t = (a - 90) * Math.PI / 180;
            h += `<line x1="${k.cx + 21 * Math.cos(t)}" y1="${cy + 21 * Math.sin(t)}" x2="${k.cx + 27 * Math.cos(t)}" y2="${cy + 27 * Math.sin(t)}" stroke="#222"/>`;
        });
        h += `<circle cx="${k.cx}" cy="${cy}" r="18" fill="#f4f4f4" stroke="url(#kn${el.dataset.kind})" stroke-width="3"/>`;
        h += `<path d="M${k.cx - 15} ${cy - 11}h7l-3.500 5z" fill="#0a2ad8"/>`;
        h += `<text x="${k.cx}" y="${cy + 4}" text-anchor="middle" font-size="${k.size}" fill="#111" font-family="Liberation Sans">${k.val}</text>`;
        k.labels.forEach(l => { h += `<text x="${l[1]}" y="${l[2]}" text-anchor="middle" font-size="10" fill="#222" font-family="Liberation Sans">${l[0]}</text>`; });
        el.innerHTML = h;
    });
</script>
<script src="https://cdn.jsdelivr.net/npm/bootstrap@5.3.0/dist/js/bootstrap.bundle.min.js"></script>
</body>
</html>
